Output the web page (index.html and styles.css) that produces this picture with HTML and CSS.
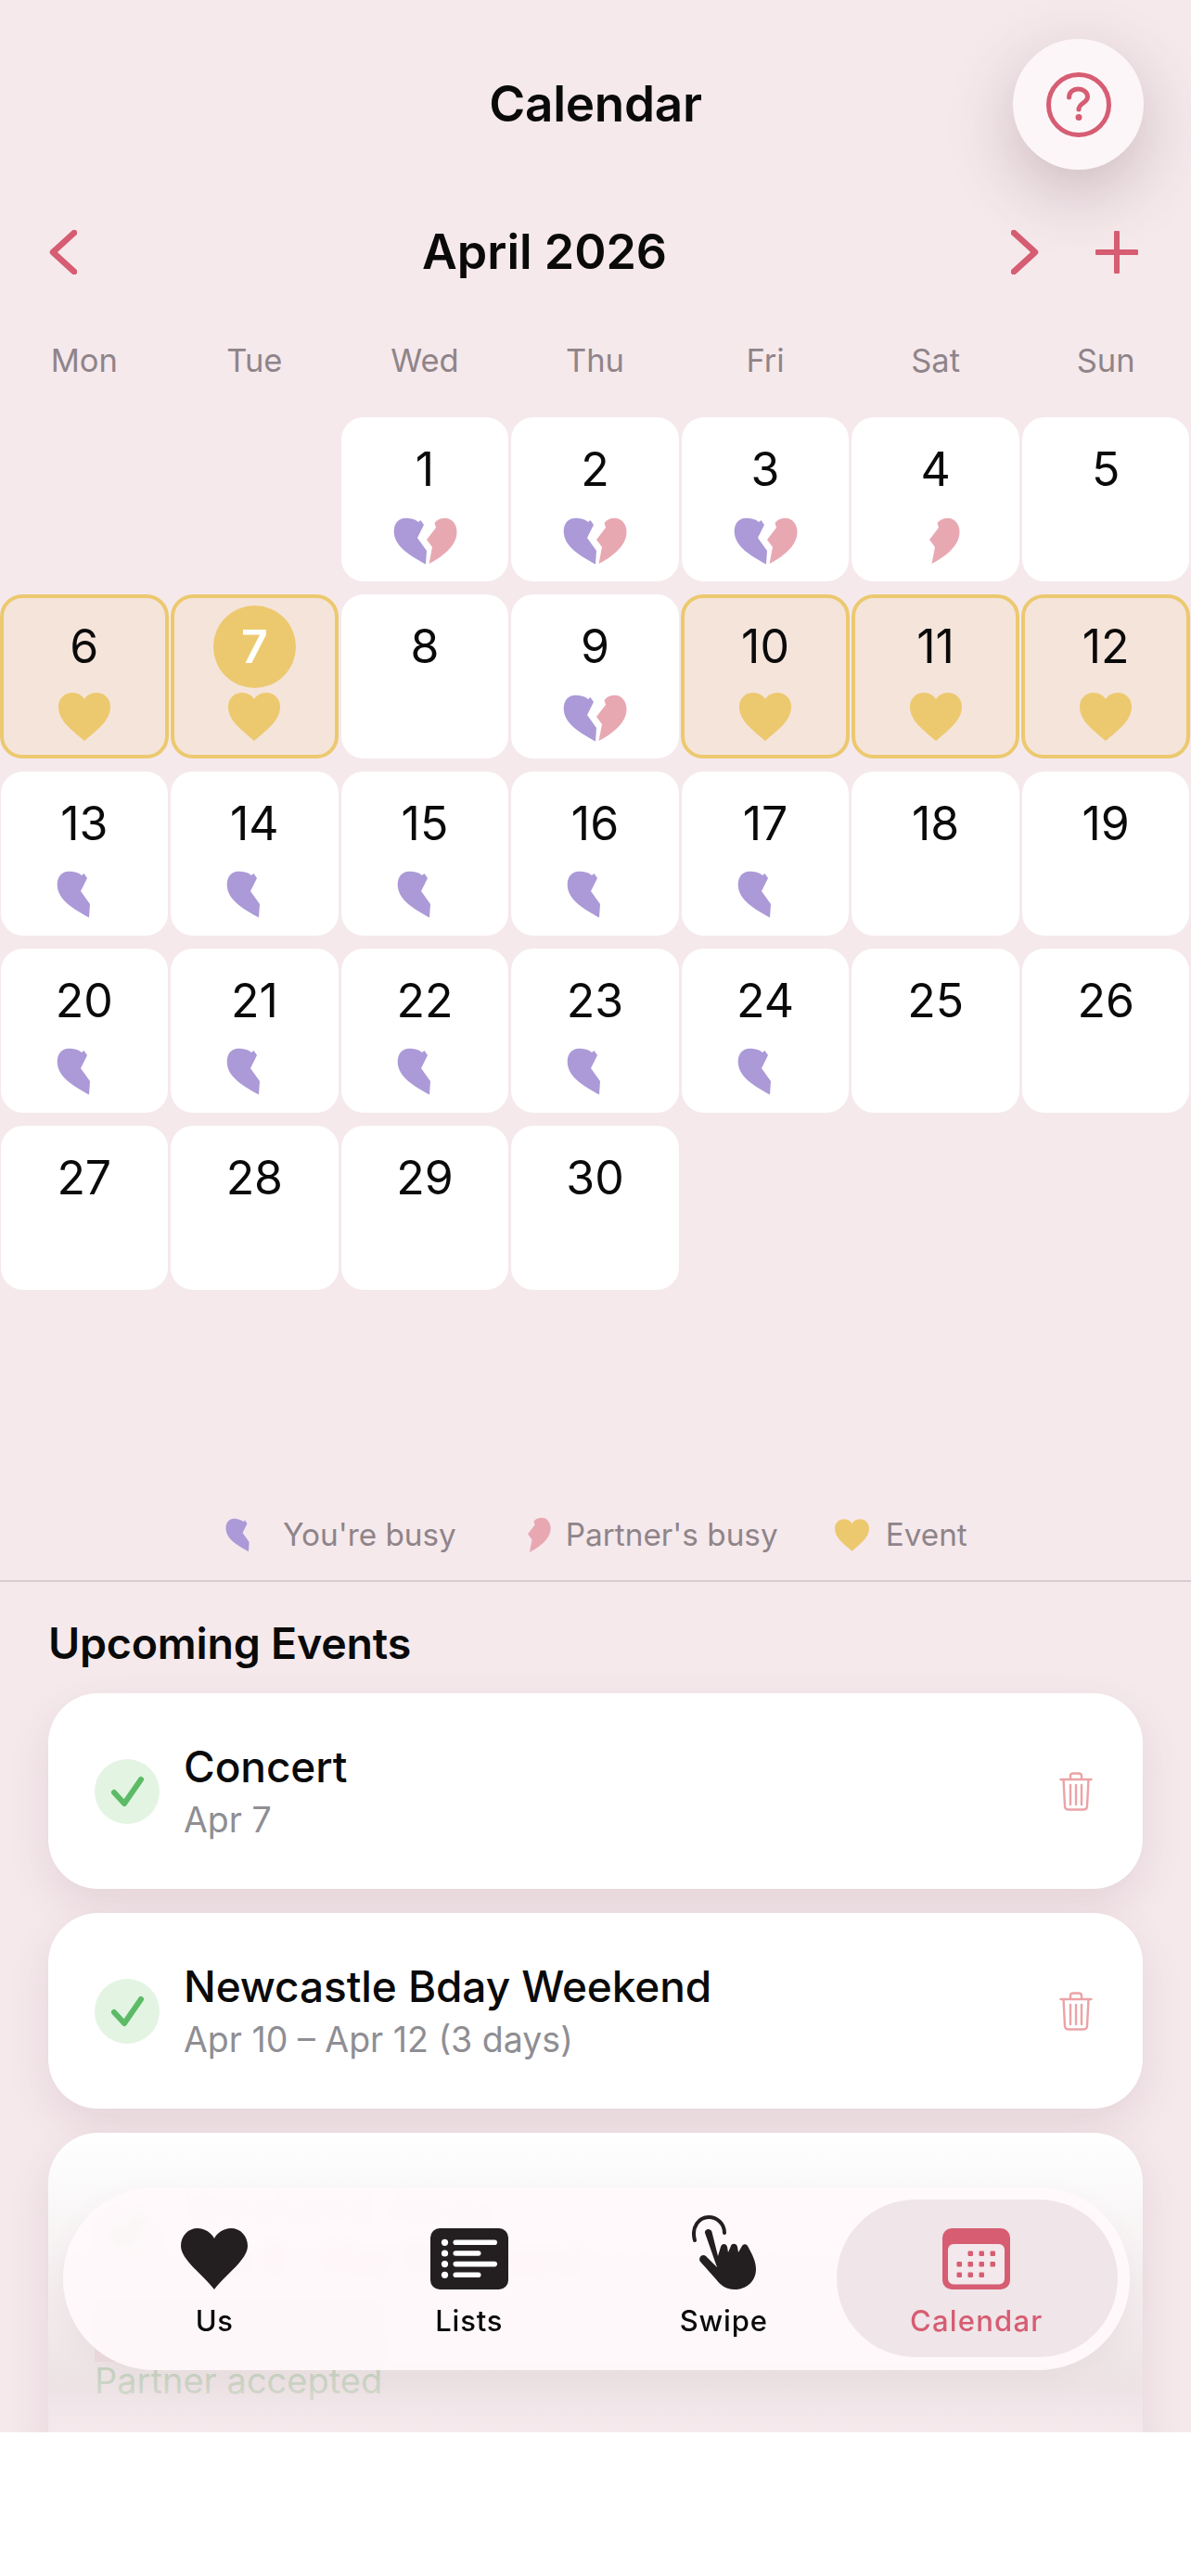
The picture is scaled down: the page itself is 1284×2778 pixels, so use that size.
FILE: index.html
```html
<!DOCTYPE html>
<html lang="en">
<head>
<meta charset="utf-8">
<title>Calendar</title>
<link rel="stylesheet" href="styles.css">
</head>
<body>
<svg class="defs" width="0" height="0" aria-hidden="true">
  <defs>
    <symbol id="you" viewBox="0 0 36.5 51"><path d="M35 50.5C20 42 .7 32 .7 15 .7 6 6 .7 13 .7c5 0 11 1.3 14 4.3L29.5 3 33 8 26 22l10 14z" fill="#ab9ad7"/></symbol>
    <symbol id="partner" viewBox="36 0 33 51"><path d="M38.5 50 42 32l-6-8 10-13-1.5-5c2.500-3.500 6.500-5.300 11.500-5.300 7 0 12.500 6.300 12.500 15.300 0 16-18.500 28-30 34z" fill="#e8a8b2"/></symbol>
    <symbol id="broken" viewBox="0 0 69 51"><path d="M35 50.5C20 42 .7 32 .7 15 .7 6 6 .7 13 .7c5 0 11 1.3 14 4.3L29.5 3 33 8 26 22l10 14z" fill="#ab9ad7"/><path d="M38.5 50 42 32l-6-8 10-13-1.5-5c2.500-3.500 6.500-5.300 11.500-5.300 7 0 12.500 6.300 12.500 15.300 0 16-18.500 28-30 34z" fill="#e8a8b2"/></symbol>
    <symbol id="gold" viewBox="0 0 56 52"><path d="M28 52C14 40 0 30 0 15 0 6 7 0 15 0c6 0 10.500 3 13 7 2.500-4 7-7 13-7 8 0 15 6 15 15 0 15-14 25-28 37z" fill="#ecc96f"/></symbol>
    <symbol id="tick" viewBox="0 0 70 70"><path d="M21 36l11 12 18-26" fill="none" stroke="#5cbb66" stroke-width="6" stroke-linecap="round" stroke-linejoin="round"/></symbol>
    <symbol id="bin" viewBox="0 0 36 42"><path d="M1.500 8h33M12 8V4.500Q12 1.500 15 1.500h6Q24 1.500 24 4.500V8M4.500 8l1.500 29q.3 3.500 3.500 3.500h17q3.200 0 3.500-3.500L31.500 8M12 14v21M18 14v21M24 14v21" fill="none" stroke="#eba3a6" stroke-width="2.400" stroke-linecap="round" stroke-linejoin="round"/></symbol>
  </defs>
</svg>
<div class="app">
  <header class="title-bar"><h1 class="title">Calendar</h1></header>
  <button class="help" type="button" aria-label="Help">
    <svg class="help-icon" viewBox="0 0 70 70"><circle cx="35" cy="35" r="32.500" fill="none" stroke="#d65d72" stroke-width="5"/><path d="M24.500 27c0-5.500 4.500-9 10-9s10 3.500 10 8.500c0 6.500-9.500 6.500-9.500 13.500" fill="none" stroke="#d65d72" stroke-width="5" stroke-linecap="round"/><circle cx="35" cy="48.500" r="3.500" fill="#d65d72"/></svg>
  </button>

  <section class="month-bar">
    <svg class="chev" viewBox="0 0 30 48"><path d="M27 3 4 24l23 21" fill="none" stroke="#d65d72" stroke-width="6.500" stroke-linecap="round" stroke-linejoin="round"/></svg>
    <h2 class="month">April 2026</h2>
    <svg class="chev chev-right" viewBox="0 0 30 48"><path d="M3 3l23 21L3 45" fill="none" stroke="#d65d72" stroke-width="6.500" stroke-linecap="round" stroke-linejoin="round"/></svg>
    <svg class="plus" viewBox="0 0 46 46"><path d="M23 2v42M2 23h42" fill="none" stroke="#d65d72" stroke-width="6" stroke-linecap="round"/></svg>
  </section>

  <div class="weekdays"><span>Mon</span><span>Tue</span><span>Wed</span><span>Thu</span><span>Fri</span><span>Sat</span><span>Sun</span></div>

  <div class="grid">
    <div class="blank"></div><div class="blank"></div>
    <div class="day"><span class="num">1</span><svg class="mark broken"><use href="#broken"/></svg></div>
    <div class="day"><span class="num">2</span><svg class="mark broken"><use href="#broken"/></svg></div>
    <div class="day"><span class="num">3</span><svg class="mark broken"><use href="#broken"/></svg></div>
    <div class="day"><span class="num">4</span><svg class="mark half-p"><use href="#partner"/></svg></div>
    <div class="day"><span class="num">5</span></div>

    <div class="day event"><span class="num">6</span><svg class="mark gold"><use href="#gold"/></svg></div>
    <div class="day event"><span class="num today">7</span><svg class="mark gold"><use href="#gold"/></svg></div>
    <div class="day"><span class="num">8</span></div>
    <div class="day"><span class="num">9</span><svg class="mark broken"><use href="#broken"/></svg></div>
    <div class="day event"><span class="num">10</span><svg class="mark gold"><use href="#gold"/></svg></div>
    <div class="day event"><span class="num">11</span><svg class="mark gold"><use href="#gold"/></svg></div>
    <div class="day event"><span class="num">12</span><svg class="mark gold"><use href="#gold"/></svg></div>

    <div class="day"><span class="num">13</span><svg class="mark half-y"><use href="#you"/></svg></div>
    <div class="day"><span class="num">14</span><svg class="mark half-y"><use href="#you"/></svg></div>
    <div class="day"><span class="num">15</span><svg class="mark half-y"><use href="#you"/></svg></div>
    <div class="day"><span class="num">16</span><svg class="mark half-y"><use href="#you"/></svg></div>
    <div class="day"><span class="num">17</span><svg class="mark half-y"><use href="#you"/></svg></div>
    <div class="day"><span class="num">18</span></div>
    <div class="day"><span class="num">19</span></div>

    <div class="day"><span class="num">20</span><svg class="mark half-y"><use href="#you"/></svg></div>
    <div class="day"><span class="num">21</span><svg class="mark half-y"><use href="#you"/></svg></div>
    <div class="day"><span class="num">22</span><svg class="mark half-y"><use href="#you"/></svg></div>
    <div class="day"><span class="num">23</span><svg class="mark half-y"><use href="#you"/></svg></div>
    <div class="day"><span class="num">24</span><svg class="mark half-y"><use href="#you"/></svg></div>
    <div class="day"><span class="num">25</span></div>
    <div class="day"><span class="num">26</span></div>

    <div class="day"><span class="num">27</span></div>
    <div class="day"><span class="num">28</span></div>
    <div class="day"><span class="num">29</span></div>
    <div class="day"><span class="num">30</span></div>
  </div>

  <div class="legend">
    <div class="legend-item li-you"><svg class="lg-you"><use href="#you"/></svg><span>You're busy</span></div>
    <div class="legend-item li-partner"><svg class="lg-partner"><use href="#partner"/></svg><span>Partner's busy</span></div>
    <div class="legend-item"><svg class="lg-gold"><use href="#gold"/></svg><span>Event</span></div>
  </div>

  <section class="events">
    <h3 class="events-title">Upcoming Events</h3>
    <article class="card">
      <div class="check"><svg><use href="#tick"/></svg></div>
      <div class="card-body"><div class="card-title">Concert</div><div class="card-date">Apr 7</div></div>
      <svg class="trash"><use href="#bin"/></svg>
    </article>
    <article class="card">
      <div class="check"><svg><use href="#tick"/></svg></div>
      <div class="card-body"><div class="card-title">Newcastle Bday Weekend</div><div class="card-date">Apr 10 – Apr 12 (3 days)</div></div>
      <svg class="trash"><use href="#bin"/></svg>
    </article>
    <article class="card card-last">
      <div class="card-row">
        <div class="check"><svg><use href="#tick"/></svg></div>
        <div class="card-body"><div class="card-title title-hidden">Weekend Away</div><div class="card-date date-pink">May 8 – May 10 (3 days)</div></div>
        <svg class="trash"><use href="#bin"/></svg>
      </div>
      <div class="ghost"></div>
      <div class="status">Partner accepted</div>
    </article>
  </section>

  <nav class="tabbar">
    <div class="tab">
      <svg class="tab-icon" width="72" height="66" viewBox="0 0 72 66"><path d="M36 66C24 50 0 34 0 19 0 8 8 0 18 0c8 0 15 5 18 11 3-6 10-11 18-11 10 0 18 8 18 19 0 15-24 31-36 47z" fill="#231f20"/></svg>
      <span class="tab-label">Us</span>
    </div>
    <div class="tab">
      <svg class="tab-icon" width="84" height="66" viewBox="0 0 84 66"><rect width="84" height="66" rx="10" fill="#231f20"/><g fill="#fff"><circle cx="15.500" cy="15.300" r="3.600"/><circle cx="15.500" cy="27" r="3.600"/><circle cx="15.500" cy="38.600" r="3.600"/><circle cx="15.500" cy="50.300" r="3.600"/><rect x="24.500" y="12.500" width="47.500" height="5.600" rx="2.800"/><rect x="24.500" y="24.200" width="30" height="5.600" rx="2.800"/><rect x="24.500" y="35.800" width="47.500" height="5.600" rx="2.800"/><rect x="24.500" y="47.500" width="30" height="5.600" rx="2.800"/></g></svg>
      <span class="tab-label">Lists</span>
    </div>
    <div class="tab">
      <svg class="tab-icon tab-icon-tall" width="69" height="80" viewBox="0 0 69 80"><path d="M3 27C-1 12 8 2 18 2c9 0 17 7 17 17" fill="none" stroke="#231f20" stroke-width="4" stroke-linecap="round"/><path d="M14 19c-1-4 6-6 7.500-1L28 44l3-10c1-4 6-4 7 0l1 6 3-7c1-3 6-3 7 1l1 6 4-7c2-3 6-2 7 2 4 7 8 15 8 23 0 14-11 22-23 22-11 0-16-6-21-12L9 50c-3-4 2-9 6-6l12 12z" fill="#231f20"/></svg>
      <span class="tab-label">Swipe</span>
    </div>
    <div class="tab tab-active">
      <svg class="tab-icon" width="73" height="66" viewBox="0 0 73 66"><rect width="73" height="66" rx="10" fill="#d65d72"/><rect x="6" y="17" width="61" height="43.500" rx="6" fill="#f3e8eb"/><g fill="#d65d72"><rect x="27.500" y="24.500" width="5.500" height="5.500" rx="1.200"/><rect x="39.500" y="24.500" width="5.500" height="5.500" rx="1.200"/><rect x="51.500" y="24.500" width="5.500" height="5.500" rx="1.200"/><rect x="15.500" y="36" width="5.500" height="5.500" rx="1.200"/><rect x="27.500" y="36" width="5.500" height="5.500" rx="1.200"/><rect x="39.500" y="36" width="5.500" height="5.500" rx="1.200"/><rect x="51.500" y="36" width="5.500" height="5.500" rx="1.200"/><rect x="15.500" y="47.500" width="5.500" height="5.500" rx="1.200"/><rect x="27.500" y="47.500" width="5.500" height="5.500" rx="1.200"/><rect x="39.500" y="47.500" width="5.500" height="5.500" rx="1.200"/></g></svg>
      <span class="tab-label">Calendar</span>
    </div>
  </nav>
</div>
</body>
</html>
```

FILE: styles.css
```css
* { box-sizing: border-box; }
html, body { margin: 0; padding: 0; background: #fff; }
body { font-family: Inter, "Liberation Sans", sans-serif; color: #0a0a0a; }
.defs { position: absolute; }

.app {
  position: relative;
  height: 2623px;
  overflow: hidden;
  background: #f5e9ec;
}

.title-bar { height: 224px; display: flex; justify-content: center; padding-top: 80px; }
.title { margin: 0; font-size: 53px; line-height: 64px; font-weight: 600; letter-spacing: -0.3px; }

.help {
  position: absolute;
  left: 1092px;
  top: 42px;
  width: 141px;
  height: 141px;
  padding: 0;
  border: 0;
  border-radius: 50%;
  background: #fdf6f9;
  box-shadow: 0 24px 70px rgba(100, 70, 75, 0.28);
  display: flex;
  align-items: center;
  justify-content: center;
}
.help-icon { width: 70px; height: 70px; }

.month-bar { height: 96px; display: flex; align-items: center; padding-left: 53px; }
.chev { width: 30px; height: 48px; flex: none; }
.month { margin: 0 0 0 372px; font-size: 52px; line-height: 64px; font-weight: 600; width: 262px; white-space: nowrap; letter-spacing: 0; }
.chev-right { margin-left: 373px; }
.plus { width: 46px; height: 46px; margin-left: 61px; flex: none; }

.weekdays { display: grid; grid-template-columns: repeat(7, 1fr); height: 130px; padding-top: 49px; margin-left: -1px; }
.weekdays span { text-align: center; font-size: 34.500px; line-height: 40px; color: #8f8489; }

.grid { display: grid; grid-template-columns: repeat(7, 1fr); grid-auto-rows: 177px; row-gap: 14px; margin-left: -1px; }
.day {
  margin: 0 1.500px;
  background: #fff;
  border-radius: 24px;
  display: flex;
  flex-direction: column;
  align-items: center;
  position: relative;
}
.day.event { background: #f5e4da; border: 4px solid #ecc96f; margin: 0 1px; }
.num { height: 89px; margin-top: 12px; font-size: 50px; line-height: 89px; font-weight: 400; text-align: center; }
.event .num { margin-top: 8px; }
.event .num.today { width: 89px; height: 89px; margin-top: 8px; border-radius: 50%; background: #ecc96f; color: #fff; font-weight: 600; }
.mark { position: absolute; }
.broken { width: 69px; height: 51px; top: 108px; left: 56px; }
.gold { width: 56px; height: 52px; top: 102px; left: calc(50% - 28px); }
.half-y { width: 36.500px; height: 51px; top: 107px; left: 60px; }
.half-p { width: 33px; height: 51px; top: 108px; left: 84px; }

.legend { display: flex; align-items: center; height: 95px; margin-top: 218px; padding: 0 0 3px 243px; color: #8f8489; font-size: 33.300px; }
.legend-item { display: flex; align-items: center; }
.legend svg { flex: none; }
.lg-you { width: 26px; height: 39px; margin-right: 36px; }
.lg-partner { width: 25px; height: 39px; margin-right: 16px; }
.lg-gold { width: 37px; height: 35px; margin-right: 18px; }
.li-you { margin-right: 77px; }
.li-partner { margin-right: 61px; }

.events { border-top: 2px solid #d9ccd0; padding: 38px 52px 0; }
.events-title { margin: 0 0 26px; font-size: 46.500px; line-height: 56px; font-weight: 600; letter-spacing: -0.2px; }

.card {
  height: 211px;
  margin-bottom: 26px;
  border-radius: 54px;
  background: #fff;
  box-shadow: 0 18px 44px rgba(120, 80, 90, 0.13);
  display: flex;
  align-items: center;
  padding: 0 54px 0 50px;
}
.card-last { display: block; height: 440px; position: relative; }
.card-last::after {
  content: "";
  position: absolute;
  inset: 0 0 auto;
  height: 325px;
  border-radius: 54px 54px 0 0;
  background: linear-gradient(to bottom, rgba(233, 225, 225, 0), rgba(233, 225, 225, 0.2) 20%, rgba(233, 220, 223, 0.8) 84%, rgba(245, 232, 236, 0.95));
}
.card-row { display: flex; align-items: center; height: 211px; }
.check { width: 70px; height: 70px; flex: none; border-radius: 50%; background: #e3f4e3; }
.check svg { display: block; width: 70px; height: 70px; }
.card-body { flex: 1; margin-left: 26px; }
.card-title { font-size: 46px; line-height: 56px; font-weight: 500; letter-spacing: -0.1px; }
.title-hidden { color: #f3e7ea; }
.card-date { margin-top: 6px; font-size: 37.500px; line-height: 48px; color: #8e8e93; }
.date-pink { color: #d98a9c; }
.trash { width: 36px; height: 42px; flex: none; }
.ghost { width: 310px; height: 65px; margin-top: -29px; background: rgba(230, 130, 150, 0.3); }
.status { margin-top: -4px; font-size: 38px; line-height: 48px; color: #5cbb66; }

.tabbar {
  position: absolute;
  left: 68px;
  top: 2359px;
  width: 1150px;
  height: 197px;
  padding: 0 26px;
  border-radius: 99px;
  background: rgba(255, 249, 251, 0.93);
  box-shadow: 0 10px 30px rgba(120, 80, 90, 0.06);
  -webkit-backdrop-filter: blur(6px);
  backdrop-filter: blur(6px);
  display: grid;
  grid-template-columns: repeat(4, 1fr);
}
.tab { position: relative; display: flex; flex-direction: column; align-items: center; }
.tab-icon { margin-top: 44px; position: relative; }
.tab-icon-tall { margin-top: 30px; }
.tab-label { position: relative; margin-top: 15px; font-size: 31px; line-height: 38px; font-weight: 500; letter-spacing: 0.8px; color: #0a0a0a; }
.tab-active { padding-right: 4px; }
.tab-active::before {
  content: "";
  position: absolute;
  left: -16px;
  right: -13px;
  top: 13px;
  bottom: 14px;
  border-radius: 85px;
  background: #f0e5e9;
}
.tab-active .tab-label { color: #d65d72; letter-spacing: 1.2px; }
```
